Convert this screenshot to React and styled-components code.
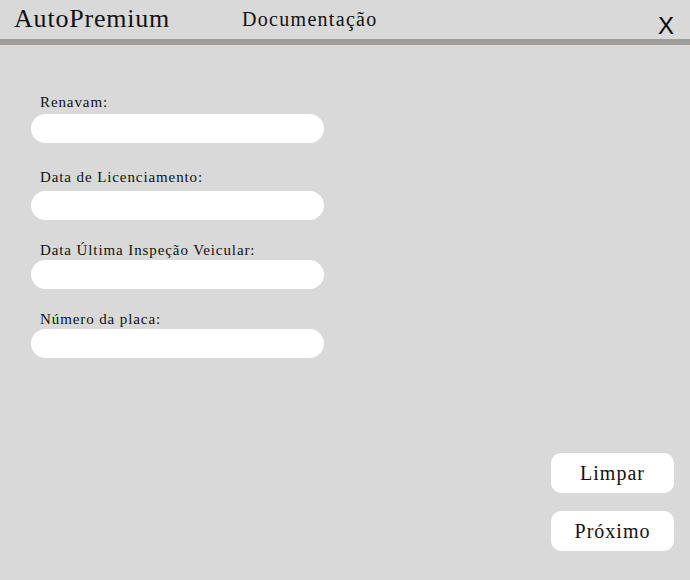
import React from 'react';
import styled, { createGlobalStyle } from 'styled-components';

const GlobalStyle = createGlobalStyle`
  html, body {
    margin: 0;
    padding: 0;
    background: #d9d9d9;
  }
  * {
    box-sizing: border-box;
  }
`;

const Page = styled.div`
  height: 100vh;
  display: flex;
  flex-direction: column;
  background: #d9d9d9;
  font-family: "Liberation Serif", "DejaVu Serif", serif;
  color: #111;
`;

const Header = styled.header`
  height: 45px;
  display: flex;
  align-items: flex-start;
  padding: 4px 16px 0 14px;
  border-bottom: 6px solid #a09d9d;
`;

const Brand = styled.div`
  font-size: 26px;
  letter-spacing: 0.8px;
  line-height: 30px;
  width: 228px;
`;

const Title = styled.div`
  font-size: 20px;
  letter-spacing: 1.3px;
  line-height: 30px;
  flex: 1;
`;

const CloseButton = styled.button`
  background: none;
  border: none;
  padding: 0;
  margin-top: 9px;
  font-family: "Liberation Sans", Arial, sans-serif;
  font-size: 24px;
  line-height: 26px;
  color: #000;
  cursor: pointer;
`;

const Main = styled.main`
  flex: 1;
  display: flex;
  justify-content: space-between;
  padding: 48px 16px 29px 31px;
`;

const Form = styled.form`
  display: flex;
  flex-direction: column;
  gap: 21px;
  width: 293px;
`;

const Field = styled.label`
  display: flex;
  flex-direction: column;
  gap: ${p => p.$gap}px;
  margin-bottom: ${p => p.$extra || 0}px;
`;

const LabelText = styled.span`
  font-size: 15px;
  line-height: 18px;
  letter-spacing: 0.9px;
  padding-left: 9px;
`;

const Input = styled.input`
  height: 29px;
  border: none;
  border-radius: 15px;
  background: #fff;
  outline: none;
  padding: 0 14px;
  font-family: inherit;
  font-size: 14px;
`;

const Actions = styled.div`
  align-self: flex-end;
  display: flex;
  flex-direction: column;
  gap: 18px;
`;

const ActionButton = styled.button`
  width: 123px;
  height: 40px;
  border: none;
  border-radius: 10px;
  background: #fff;
  font-family: "Liberation Serif", "DejaVu Serif", serif;
  font-size: 20px;
  letter-spacing: 1px;
  color: #111;
  cursor: pointer;
`;

const fields = [
  { label: 'Renavam:', gap: 3, extra: 4 },
  { label: 'Data de Licenciamento:', gap: 5 },
  { label: 'Data Última Inspeção Veicular:', gap: 1 },
  { label: 'Número da placa:', gap: 1 },
];

export default function App() {
  return (
    <>
      <GlobalStyle />
      <Page>
        <Header>
          <Brand>AutoPremium</Brand>
          <Title>Documentação</Title>
          <CloseButton type="button">X</CloseButton>
        </Header>
        <Main>
          <Form onSubmit={e => e.preventDefault()}>
            {fields.map(f => (
              <Field key={f.label} $gap={f.gap} $extra={f.extra}>
                <LabelText>{f.label}</LabelText>
                <Input type="text" />
              </Field>
            ))}
          </Form>
          <Actions>
            <ActionButton type="button">Limpar</ActionButton>
            <ActionButton type="button">Próximo</ActionButton>
          </Actions>
        </Main>
      </Page>
    </>
  );
}
